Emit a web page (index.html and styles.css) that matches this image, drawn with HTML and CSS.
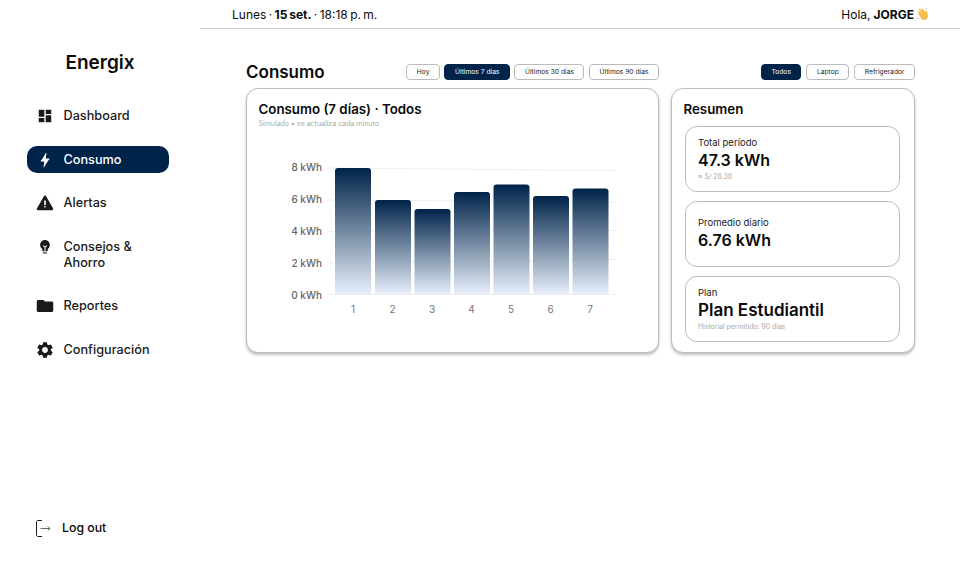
FILE: index.html
```html
<!DOCTYPE html>
<html lang="es">
<head>
	<meta charset="utf-8" />
	<title>Energix</title>
	<link rel="stylesheet" href="styles.css">
</head>
<body>
	<div class="app">
		<aside class="sidebar">
			<div class="brand">Energix</div>
			<nav class="nav">
				<a class="nav-item">
					<svg class="nav-icon" viewBox="-1 -1 26 26"><path d="M3 13h8V3H3v10zm0 8h8v-6H3v6zm10 0h8V11h-8v10zm0-18v6h8V3h-8z"/></svg>
					<span>Dashboard</span>
				</a>
				<a class="nav-item active">
					<svg class="nav-icon" viewBox="0 0 24 24"><path d="M11 21.500h-1l1-7.500H6.500c-.58 0-.57-.32-.38-.66.19-.34.05-.08.07-.12C8.480 10.940 10.420 7.040 13 2.500h1l-1 7.500h4.500c.49 0 .56.33.47.51l-.07.15C12.960 17.550 11 21.500 11 21.500z"/></svg>
					<span>Consumo</span>
				</a>
				<a class="nav-item">
					<svg class="nav-icon" viewBox="0 0 24 24">
						<path class="warn" d="M12 3.500L2.500 20h19z"/>
						<path class="warn-mark" d="M12 9.500v4.500M12 17v.1"/>
					</svg>
					<span>Alertas</span>
				</a>
				<a class="nav-item">
					<svg class="nav-icon" viewBox="-1 -1 26 26">
						<path d="M12 2C8.100 2 5 5.100 5 9c0 2.400 1.200 4.500 3 5.700V17c0 .6.4 1 1 1h6c.6 0 1-.4 1-1v-2.300c1.800-1.200 3-3.300 3-5.700 0-3.900-3.100-7-7-7z"/>
						<path class="bulb-base" d="M9 19h6v2c0 .6-.4 1-1 1h-4c-.6 0-1-.4-1-1z"/>
						<path class="bulb-y" d="M9.500 10l2.500 2.500 2.500-2.500M12 12.500V18"/>
					</svg>
					<span>Consejos &amp; Ahorro</span>
				</a>
				<a class="nav-item">
					<svg class="nav-icon" viewBox="0 0 24 24"><path d="M10 4H3C1.900 4 1 4.900 1 6v12c0 1.100.9 2 2 2h18c1.100 0 2-.9 2-2V8c0-1.100-.9-2-2-2h-9l-2-2z"/></svg>
					<span>Reportes</span>
				</a>
				<a class="nav-item">
					<svg class="nav-icon" viewBox="1 1 22 22"><path d="M19.140 12.940c.04-.3.06-.61.06-.94 0-.32-.02-.64-.07-.94l2.030-1.580c.18-.14.23-.41.12-.61l-1.920-3.320c-.12-.22-.37-.29-.59-.22l-2.390.96c-.5-.38-1.030-.7-1.620-.94l-.36-2.540c-.04-.24-.24-.41-.48-.41h-3.840c-.24 0-.43.17-.47.41l-.36 2.540c-.59.24-1.130.57-1.620.94l-2.390-.96c-.22-.08-.47 0-.59.22L2.740 8.870c-.12.21-.08.47.12.61l2.030 1.580c-.05.3-.09.63-.09.94s.02.64.07.94l-2.030 1.580c-.18.14-.23.41-.12.61l1.920 3.320c.12.22.37.29.59.22l2.390-.96c.5.38 1.030.7 1.620.94l.36 2.540c.05.24.24.41.48.41h3.840c.24 0 .44-.17.47-.41l.36-2.540c.59-.24 1.130-.56 1.620-.94l2.390.96c.22.08.47 0 .59-.22l1.920-3.320c.12-.22.07-.47-.12-.61l-2.010-1.580zM12 15.600c-1.980 0-3.600-1.620-3.600-3.600s1.620-3.600 3.600-3.600 3.600 1.620 3.600 3.600-1.620 3.600-3.600 3.600z"/></svg>
					<span>Configuración</span>
				</a>
			</nav>
			<a class="logout">
				<svg class="logout-icon" viewBox="0 0 15 17">
					<path d="M6 .5H2C1.200.5.500 1.200.500 2v13c0 .8.7 1.500 1.500 1.500h4"/>
					<path class="logout-arrow" d="M4.500 8.500H14M11.800 6.300L14 8.500l-2.200 2.200"/>
				</svg>
				<span>Log out</span>
			</a>
		</aside>

		<div class="content">
			<header class="topbar">
				<div class="date">Lunes · <b>15 set.</b> · 18:18 p. m.</div>
				<div class="greeting">Hola, <b>JORGE</b>
					<svg class="wave" viewBox="0 0 14 14">
						<path d="M2.200 6.500l3 5c1 1.500 3.200 2 4.800 1 1.800-1.100 2.500-3.300 1.800-5.200l-1-3.300c-.2-.6-1.100-.4-1 .3l.2 1.500L7 1.700c-.4-.6-1.200-.1-.9.5L7.700 5 5.500 1.500c-.4-.6-1.200-.1-.9.500l2 3.500-2.800-3.800c-.4-.6-1.200-.1-.9.500l2.500 4-1.800-1.900c-.5-.5-1.200 0-1.400.2z"/>
						<path class="wave-lines" d="M9.500 1.200l1.300.8 M1.300 10.500l.9 1.400"/>
					</svg>
				</div>
			</header>

			<main class="main">
				<div class="toolbar">
					<h1 class="page-title">Consumo</h1>
					<div class="chips range">
						<button class="chip">Hoy</button>
						<button class="chip active">Últimos 7 días</button>
						<button class="chip">Últimos 30 días</button>
						<button class="chip">Últimos 90 días</button>
					</div>
					<div class="chips devices">
						<button class="chip active">Todos</button>
						<button class="chip">Laptop</button>
						<button class="chip">Refrigerador</button>
					</div>
				</div>

				<div class="panels">
					<section class="card chart-card">
						<h2 class="card-title">Consumo (7 días) · Todos</h2>
						<p class="card-sub">Simulado • se actualiza cada minuto</p>
						<svg class="chart" width="388" height="190" viewBox="0 0 388 190">
							<defs>
								<linearGradient id="barfill" x1="0" y1="0" x2="0" y2="1">
									<stop offset="0" stop-color="#002349" />
									<stop offset="1" stop-color="#e8f0fb" />
								</linearGradient>
							</defs>
							<g class="grid">
								<line x1="69" y1="28" x2="358" y2="30.500" />
								<line x1="69" y1="60" x2="358" y2="62" />
								<line x1="69" y1="91.500" x2="358" y2="90.500" />
								<line x1="69" y1="123" x2="358" y2="119.500" />
								<line x1="69" y1="154.500" x2="358" y2="154.500" />
							</g>
							<g class="ylabels">
								<text x="64" y="31">8 kWh</text>
								<text x="64" y="63">6 kWh</text>
								<text x="64" y="95">4 kWh</text>
								<text x="64" y="127">2 kWh</text>
								<text x="64" y="159">0 kWh</text>
							</g>
							<g fill="url(#barfill)">
								<path d="M77 154.500V31a3 3 0 0 1 3-3h30a3 3 0 0 1 3 3v123.500z" />
								<path d="M117 154.500V63a3 3 0 0 1 3-3h30a3 3 0 0 1 3 3v91.500z" />
								<path d="M156.500 154.500V72a3 3 0 0 1 3-3h30a3 3 0 0 1 3 3v82.500z" />
								<path d="M196 154.500V55a3 3 0 0 1 3-3h30a3 3 0 0 1 3 3v99.500z" />
								<path d="M235.500 154.500V47.500a3 3 0 0 1 3-3h30a3 3 0 0 1 3 3v107z" />
								<path d="M275 154.500V59a3 3 0 0 1 3-3h30a3 3 0 0 1 3 3v95.500z" />
								<path d="M314.500 154.500V51.500a3 3 0 0 1 3-3h30a3 3 0 0 1 3 3v103z" />
							</g>
							<g class="xlabels">
								<text x="95" y="173">1</text>
								<text x="134.500" y="173">2</text>
								<text x="174" y="173">3</text>
								<text x="213.500" y="173">4</text>
								<text x="253" y="173">5</text>
								<text x="292.500" y="173">6</text>
								<text x="332" y="173">7</text>
							</g>
						</svg>
					</section>

					<section class="card summary-card">
						<h2 class="card-title">Resumen</h2>
						<div class="stats">
							<div class="stat">
								<div class="stat-label">Total período</div>
								<div class="stat-value">47.3 kWh</div>
								<div class="stat-note">≈ S/ 28.38</div>
							</div>
							<div class="stat">
								<div class="stat-label">Promedio diario</div>
								<div class="stat-value">6.76 kWh</div>
							</div>
							<div class="stat">
								<div class="stat-label">Plan</div>
								<div class="stat-value plan-name">Plan Estudiantil</div>
								<div class="stat-note">Historial permitido: 90 días</div>
							</div>
						</div>
					</section>
				</div>
			</main>
		</div>
	</div>
</body>
</html>
```

FILE: styles.css
```css
* {
	box-sizing: border-box;
}

body {
	margin: 0;
	background-color: #fff;
	color: #0a0a0a;
	font-family: "Inter", "Liberation Sans", sans-serif;
}

.app {
	display: grid;
	grid-template-columns: 200px 1fr;
	height: 570px;
	overflow: hidden;
}

/* sidebar */
.sidebar {
	display: flex;
	flex-direction: column;
	padding: 51px 0 33px;
}

.brand {
	font-size: 19px;
	font-weight: 600;
	line-height: 24px;
	text-align: center;
	margin-bottom: 27.5px;
}

.nav {
	display: flex;
	flex-direction: column;
	gap: 16.5px;
	margin: 0 31px 0 27px;
}

.nav-item {
	display: flex;
	align-items: flex-start;
	gap: 9.5px;
	padding: 5.5px 9px;
	border-radius: 10px;
	font-size: 12.7px;
	line-height: 16px;
	font-weight: 500;
	color: #1a1a1a;
}

.nav-item.active {
	background-color: #002349;
	color: #fff;
}

.nav-icon {
	width: 18px;
	height: 18px;
	margin: -1px 0;
	flex: none;
	fill: currentColor;
}

.warn {
	stroke: currentColor;
	stroke-width: 3;
	stroke-linejoin: round;
}

.warn-mark {
	fill: none;
	stroke: #fff;
	stroke-width: 2.200;
	stroke-linecap: round;
}

.bulb-base {
	fill: #8a8a8a;
}

.bulb-y {
	fill: none;
	stroke: #fff;
	stroke-width: 1.500;
}

.logout {
	display: flex;
	align-items: center;
	gap: 11px;
	margin-top: auto;
	padding-left: 36px;
	font-size: 12.3px;
	line-height: 18px;
	font-weight: 500;
}

.logout-icon {
	width: 15px;
	height: 17px;
	fill: none;
	stroke: #222;
	stroke-width: 1;
}

.logout-arrow {
	stroke: #666;
}

/* topbar */
.topbar {
	display: flex;
	justify-content: space-between;
	align-items: center;
	height: 29px;
	padding: 0 30px 0 32px;
	border-bottom: 1px solid #ccc;
	font-size: 12px;
}

.date {
	word-spacing: -1px;
}

.greeting {
	display: flex;
	align-items: center;
	gap: 2px;
}

.greeting b {
	margin-left: 1px;
}

.wave {
	width: 14px;
	height: 14px;
	fill: #f5bf4f;
}

.wave-lines {
	fill: none;
	stroke: #9bb4c8;
	stroke-width: 1;
}

/* main */
.main {
	padding: 30px 45px 0 46px;
}

.toolbar {
	display: flex;
	align-items: center;
	height: 26px;
}

.page-title {
	margin: 0;
	font-size: 17px;
	font-weight: 600;
	line-height: 26px;
}

.chips {
	display: flex;
	gap: 4.5px;
}

.chips.devices {
	gap: 5px;
}

.chips.range {
	margin-left: auto;
	margin-right: 102px;
}

.chip {
	height: 16px;
	padding: 0 9.500px;
	border: 1px solid #bbb;
	border-radius: 4px;
	background-color: #fff;
	color: #222;
	font-family: inherit;
	font-size: 6.700px;
	line-height: 14px;
}

.chip.active {
	background-color: #002349;
	border-color: #002349;
	color: #fff;
}

.panels {
	display: grid;
	grid-template-columns: 413px 244px;
	gap: 12px;
	margin-top: 3px;
}

.card {
	height: 265px;
	border: 1px solid #bbb;
	border-radius: 12px;
	padding: 10.5px 11.5px;
	box-shadow: 0 2px 3px rgba(0, 0, 0, 0.25);
	background-color: #fff;
}

.card-title {
	margin: 0;
	font-size: 13.300px;
	font-weight: 600;
	line-height: 18px;
}

.card-sub {
	margin: 1px 0 0;
	font-size: 7px;
	line-height: 9px;
	color: #aaa;
}

.chart {
	display: block;
	margin: 12.5px 0 0 -0.5px;
}

.grid line {
	stroke: #eee;
	stroke-width: 1;
}

.ylabels text {
	text-anchor: end;
	font-size: 10px;
	font-weight: 500;
	fill: #666;
}

.xlabels text {
	text-anchor: middle;
	font-size: 10px;
	fill: #777;
}

.stats {
	display: flex;
	flex-direction: column;
	gap: 9px;
	margin: 8.5px 2.5px 0 1.5px;
}

.stat {
	display: flex;
	flex-direction: column;
	justify-content: center;
	height: 66px;
	border: 1px solid #bbb;
	border-radius: 12px;
	padding: 0 12px 1px;
}

.stat-label {
	font-size: 9.500px;
	line-height: 13px;
	color: #222;
}

.stat-value {
	font-size: 16px;
	font-weight: 600;
	line-height: 22px;
}

.plan-name {
	font-size: 17px;
}

.stat-note {
	margin-top: 1px;
	font-size: 6.900px;
	line-height: 9px;
	color: #aaa;
}
```
